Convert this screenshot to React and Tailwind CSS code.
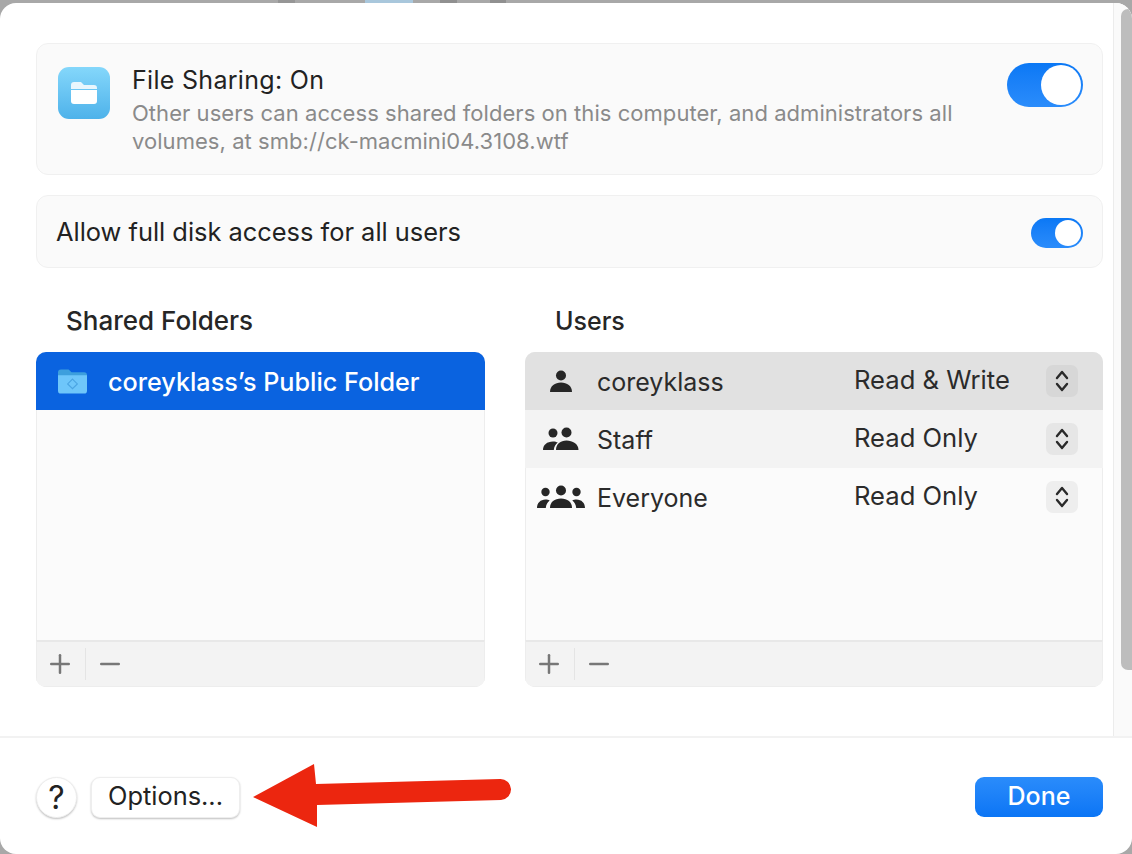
import { Plus, Minus } from "lucide-react";

function Toggle({ big }) {
  return (
    <div
      className={
        big
          ? "flex h-[44px] w-[76px] justify-end rounded-full bg-gradient-to-b from-[#0a78f5] to-[#2a8cfb] p-[2px]"
          : "flex h-[30px] w-[52px] justify-end rounded-full bg-gradient-to-b from-[#0a78f5] to-[#2a8cfb] p-[2px]"
      }
    >
      <div className={big ? "h-[40px] w-[40px] rounded-full bg-white" : "h-[26px] w-[26px] rounded-full bg-white"} />
    </div>
  );
}

function OnePerson({ className }) {
  return (
    <svg viewBox="0 0 24 24" className={className} fill="#262626">
      <circle cx="12" cy="6.5" r="5" />
      <path d="M1 23c0-6 5-9.500 11-9.500S23 17 23 23z" />
    </svg>
  );
}

function TwoPeople() {
  return (
    <svg viewBox="0 0 36 24" className="h-[24px] w-[36px]" fill="#262626">
      <circle cx="10" cy="6" r="4.500" />
      <path d="M0 23c0-5 4-8.500 10-8.500 2 0 3.500.4 4.800 1.100C12.500 17.500 11 20 10.800 23z" />
      <circle cx="23.500" cy="5.500" r="5" />
      <path d="M13 23c0-6 4.500-9.500 10.500-9.500S35.500 17 35.500 23z" />
    </svg>
  );
}

function ThreePeople() {
  return (
    <svg viewBox="0 0 48 24" className="h-[24px] w-[48px]" fill="#262626">
      <circle cx="8.500" cy="7" r="4.200" />
      <path d="M0 23c0-5 3.500-8.500 8.500-8.500 1.700 0 3 .3 4.200 1-2.300 1.600-3.700 4.300-3.900 7.500z" />
      <circle cx="39.500" cy="7" r="4.200" />
      <path d="M48 23c0-5-3.500-8.500-8.500-8.500-1.700 0-3 .3-4.200 1 2.300 1.600 3.700 4.300 3.900 7.500z" />
      <circle cx="24" cy="5.500" r="5" />
      <path d="M13 23c0-6 4.500-9.500 11-9.500S35 17 35 23z" />
    </svg>
  );
}

function Stepper({ bg }) {
  return (
    <div className={`flex h-[32px] w-[32px] items-center justify-center rounded-[7px] ${bg}`}>
      <svg viewBox="0 0 16 24" className="h-[24px] w-[16px]" fill="none" stroke="#2a2a2a" strokeWidth="2.400" strokeLinecap="round" strokeLinejoin="round">
        <path d="M3 9l5-6 5 6" />
        <path d="M3 15l5 6 5-6" />
      </svg>
    </div>
  );
}

function UserRow({ icon, name, access, rowBg, stepperBg }) {
  return (
    <div className={`flex h-[58px] flex-none items-center pr-[25px] ${rowBg}`}>
      <div className="flex w-[71px] justify-center">{icon}</div>
      <span className="ml-[1px] mt-[4px] flex-1 text-[25px] text-[#2b2b2b]">{name}</span>
      <span className="mb-[2px] w-[192px] text-[25.600px] text-[#2b2b2b]">{access}</span>
      <Stepper bg={stepperBg} />
    </div>
  );
}

function ListFooter() {
  return (
    <div className="mt-auto flex h-[47px] flex-none items-center border-x border-b border-t-2 border-x-[#ededed] border-b-[#ededed] border-t-[#e8e8e8] bg-[#f3f3f3] text-[#777777]">
      <div className="flex w-[49px] justify-center border-r border-[#e4e4e4] py-[1px] pr-[2px]">
        <Plus size={30} strokeWidth={2} />
      </div>
      <div className="flex w-[50px] justify-center pr-[2px]">
        <Minus size={30} strokeWidth={2} />
      </div>
    </div>
  );
}

export default function App() {
  return (
    <div className="h-[854px] w-[1132px] overflow-hidden bg-[#a8a8a8] font-['Inter',sans-serif]">
      {/* Blurred window behind the sheet, only its last pixels show */}
      <div className="flex h-[3px]">
        <div className="ml-[278px] w-[17px] bg-[#969696]" />
        <div className="ml-[70px] w-[48px] bg-[#a9c7dc]" />
        <div className="ml-[27px] w-[17px] bg-[#909090]" />
        <div className="ml-[33px] w-[16px] bg-[#909090]" />
      </div>
      <div className="flex h-[851px] flex-col overflow-hidden rounded-[16px] bg-white">
        <div className="flex h-[733px] flex-none">
          {/* Main pane */}
          <div className="flex-1 pl-[36px] pr-[10px] pt-[40px]">
            <div className="flex h-[132px] rounded-[12px] border border-[#f0f0f0] bg-[#fafafa] pl-[21px] pr-[19px]">
              <div className="mt-[23px] flex h-[52px] w-[52px] flex-none items-center justify-center rounded-[11px] bg-gradient-to-b from-[#84d7fb] to-[#4db2ea]">
                <svg viewBox="0 0 30 26" className="w-[30px]">
                  <path d="M2 5a3 3 0 0 1 3-3h7l3 3h10a3 3 0 0 1 3 3v1H2z" fill="#e8f6fd" />
                  <path d="M2 10h26v11a3 3 0 0 1-3 3H5a3 3 0 0 1-3-3z" fill="#ffffff" />
                </svg>
              </div>
              <div className="ml-[22px] flex-1 pt-[20px]">
                <div className="text-[25px] leading-[32px] tracking-[0.3px] text-[#222222]">File Sharing: On</div>
                <div className="mt-[3px] w-[840px] text-[22px] leading-[28px] tracking-[0.05px] text-[#8a8a8a]">
                  Other users can access shared folders on this computer, and administrators all volumes, at smb://ck-macmini04.3108.wtf
                </div>
              </div>
              <div className="mt-[19px]">
                <Toggle big />
              </div>
            </div>

            <div className="mt-[20px] flex h-[73px] items-center justify-between rounded-[12px] border border-[#f0f0f0] bg-[#fafafa] pl-[19px] pr-[19px] pt-[2px]">
              <span className="text-[25.400px] text-[#222222]">Allow full disk access for all users</span>
              <Toggle />
            </div>

            <div className="mt-[35px] flex gap-[40px]">
              <div className="w-[449px]">
                <h2 className="pb-[13px] pl-[30px] text-[26px] font-medium leading-[36px] text-[#262626]">Shared Folders</h2>
                <div className="flex h-[335px] flex-col overflow-hidden rounded-[10px] bg-[#fbfbfb] shadow-[inset_0_0_0_1px_#ededed]">
                  <div className="flex h-[58px] flex-none items-center bg-[#0a63e0] pl-[22px]">
                    <svg viewBox="0 0 30 26" className="h-[26px] w-[29px]">
                      <path d="M0 4a3 3 0 0 1 3-3h8l3 3h13a3 3 0 0 1 3 3v3H0z" fill="#3d9fdd" />
                      <path d="M0 7h30v16a3 3 0 0 1-3 3H3a3 3 0 0 1-3-3z" fill="#6ec6fa" />
                      <path d="M15 11l5 5-5 5-5-5z" fill="none" stroke="#4ba5e3" strokeWidth="1.200" />
                    </svg>
                    <span className="ml-[21px] mt-[4px] text-[25.200px] font-medium text-white">coreyklass’s Public Folder</span>
                  </div>
                  <ListFooter />
                </div>
              </div>
              <div className="w-[578px]">
                <h2 className="pb-[13px] pl-[30px] text-[25px] font-medium leading-[36px] text-[#262626]">Users</h2>
                <div className="flex h-[335px] flex-col overflow-hidden rounded-[10px] bg-[#fbfbfb] shadow-[inset_0_0_0_1px_#ededed]">
                  <UserRow icon={<OnePerson className="h-[24px] w-[24px]" />} name="coreyklass" access="Read & Write" rowBg="bg-[#e1e1e1]" stepperBg="bg-[#d7d7d7]" />
                  <UserRow icon={<TwoPeople />} name="Staff" access="Read Only" rowBg="bg-[#f3f3f3]" stepperBg="bg-[#e6e6e6]" />
                  <UserRow icon={<ThreePeople />} name="Everyone" access="Read Only" rowBg="" stepperBg="bg-[#eeeeee]" />
                  <ListFooter />
                </div>
              </div>
            </div>
          </div>

          {/* Scrollbar */}
          <div className="w-[19px] flex-none border-l border-[#ececec] bg-[#fafafa] pl-[7px]">
            <div className="mt-[6px] h-[661px] rounded-l-[7px] bg-[#bdbdbd]" />
          </div>
        </div>

        {/* Footer */}
        <div className="relative flex flex-1 items-start justify-between border-t-2 border-[#f2f2f2] pl-[36px] pr-[29px] pt-[39px]">
          <div className="flex items-center gap-[14px]">
            <div className="flex h-[41px] w-[41px] items-center justify-center rounded-full border border-[#eeeeee] bg-white text-[32px] leading-none text-[#222222] shadow-[0_1px_2px_rgba(0,0,0,0.25)]">?</div>
            <div className="flex h-[41px] w-[149px] items-center justify-center rounded-[9px] border border-[#eeeeee] bg-white pb-[2px] text-[25.400px] text-[#222222] shadow-[0_1px_2px_rgba(0,0,0,0.25)]">Options...</div>
          </div>
          <div className="flex h-[40px] w-[128px] items-center justify-center rounded-[9px] bg-gradient-to-b from-[#2a8cfb] to-[#0a75f5] text-[25px] font-medium text-white">Done</div>

          {/* Annotation arrow */}
          <svg viewBox="0 0 262 64" className="absolute left-[252px] top-[26px] h-[64px] w-[262px]">
            <path d="M1 33L62 0 64 20 248 15a10.500 10.500 0 0 1 1 21L65 41 65 63z" fill="#ec260f" />
          </svg>
        </div>
      </div>
    </div>
  );
}
